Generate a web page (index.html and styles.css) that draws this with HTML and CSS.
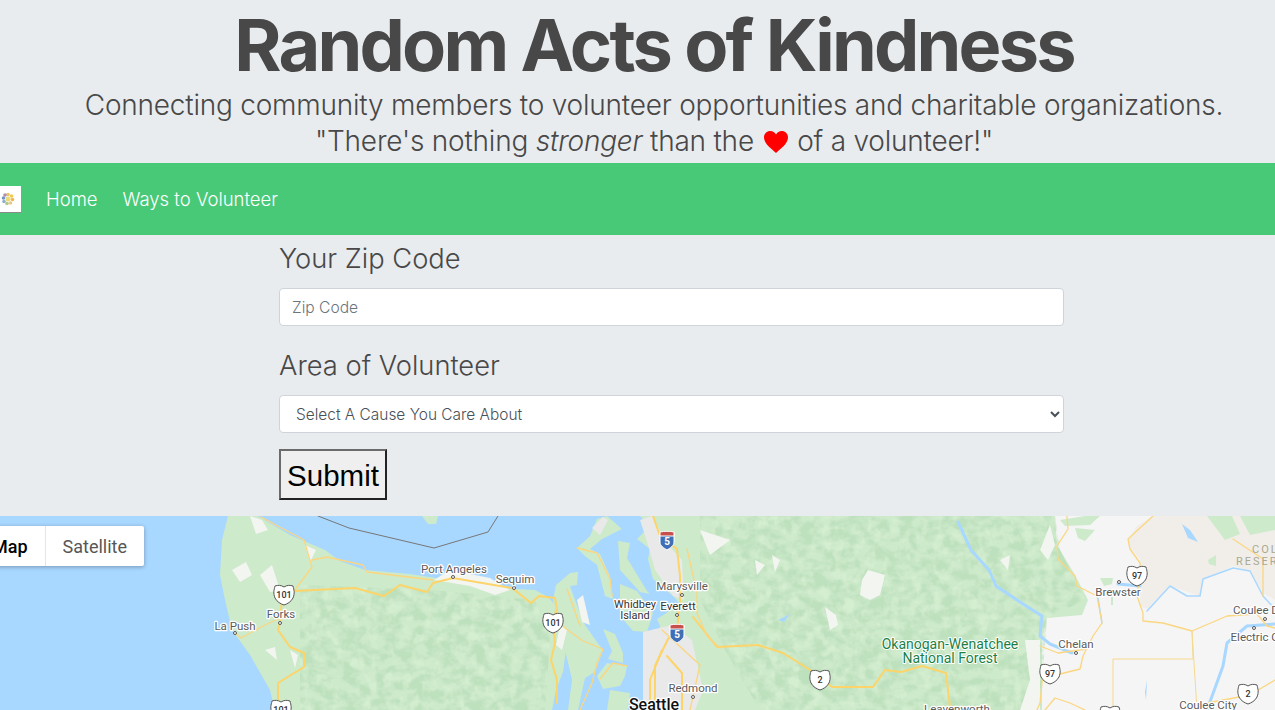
FILE: index.html
```html
<!DOCTYPE html>
<html lang="en">
<head>
<meta charset="utf-8">
<title>Random Acts of Kindness</title>
<link rel="stylesheet" href="styles.css">
</head>
<body>
<header class="hero">
  <h1 class="hero-title">Random Acts of Kindness</h1>
  <p class="hero-lead">Connecting community members to volunteer opportunities and charitable organizations.</p>
  <p class="hero-lead">"There's nothing <em>stronger</em> than the <svg class="heart" viewBox="0 0 24 22" aria-label="heart"><path d="M12 22C8 18 0 13 0 6.500C0 2.500 3 0 6.300 0C8.800 0 10.800 1.300 12 3.500C13.200 1.300 15.200 0 17.700 0C21 0 24 2.500 24 6.500C24 13 16 18 12 22Z"/></svg> of a volunteer!"</p>
</header>
<nav class="navbar">
  <a class="brand" href="#"><svg class="brand-logo" viewBox="0 0 16 16"><circle cx="8" cy="3.500" r="1.800" fill="#e9c65a"/><circle cx="11.500" cy="5" r="1.800" fill="#f0c94f"/><circle cx="12.500" cy="8.500" r="1.800" fill="#eeb84f"/><circle cx="10.500" cy="12" r="1.800" fill="#e9c98a"/><circle cx="7" cy="12.500" r="1.800" fill="#b7c88a"/><circle cx="4" cy="10.500" r="1.800" fill="#8fb0c9"/><circle cx="3.500" cy="7" r="1.800" fill="#6f94c9"/><circle cx="5" cy="4" r="1.800" fill="#b08fb0"/><circle cx="8" cy="8" r="2.500" fill="#eed97a"/></svg></a>
  <a class="nav-link" href="#">Home</a>
  <a class="nav-link" href="#">Ways to Volunteer</a>
</nav>
<form class="search-form">
  <label class="field-label" for="zip">Your Zip Code</label>
  <input class="field-control" id="zip" type="text" placeholder="Zip Code">
  <label class="field-label field-label-second" for="cause">Area of Volunteer</label>
  <select class="field-control field-select" id="cause"><option>Select A Cause You Care About</option></select>
  <button class="submit-button" type="button">Submit</button>
</form>
<section class="map">
  <svg class="map-canvas" viewBox="0 516 1275 194" width="1275" height="194">
    <defs>
      <filter id="relief-dark" x="0" y="0" width="100%" height="100%" color-interpolation-filters="sRGB">
        <feTurbulence type="fractalNoise" baseFrequency="0.07 0.1" numOctaves="3" seed="7"/>
        <feColorMatrix type="matrix" values="0 0 0 0 0.70  0 0 0 0 0.85  0 0 0 0 0.70  4 0 0 0 -1.500"/>
      </filter>
      <filter id="relief-light" x="0" y="0" width="100%" height="100%" color-interpolation-filters="sRGB">
        <feTurbulence type="fractalNoise" baseFrequency="0.09 0.07" numOctaves="3" seed="23"/>
        <feColorMatrix type="matrix" values="0 0 0 0 0.86  0 0 0 0 0.95  0 0 0 0 0.84  4 0 0 0 -1.900"/>
      </filter>
      <clipPath id="mountains-west"><path d="M300 585L430 590L535 600L550 640L545 710L300 710Z"/></clipPath>
      <clipPath id="mountains-east"><path d="M700 516L1055 516L1060 550L1085 600L1047 618L1040 710L760 710L725 650L700 600Z"/></clipPath>
      <path id="shield" d="M-9 -9C-6 -10 -3 -10 0 -8C3 -10 6 -10 9 -9C10 -5 11 -2 9 3C7 7 3 9 0 10C-3 9 -7 7 -9 3C-11 -2 -10 -5 -9 -9Z"/>
      <g id="interstate"><path class="i-blue" d="M-7 -7H7V2C7 6 3 8 0 10C-3 8 -7 6 -7 2Z"/><path class="i-red" d="M-7 -8C-3 -9 3 -9 7 -8V-4H-7Z"/><text class="i-text" y="5">5</text></g>
    </defs>

    <!-- land -->
    <path class="land" d="M228 516L258 516L290 535L325 550L340 561L365 570L410 574L455 581L500 588L535 590L548 597L556 606L557 622L566 650L563 672L556 690L552 710L275 710L270 690L250 655L232 630L225 600L220 575L222 540Z"/>
    <path class="land" d="M640 516L1275 516L1275 710L643 710L647 659L657 643L660 626L657 619L680 604L673 596L653 579L648 559L650 549L637 539L650 526Z"/>
    <path class="land" d="M422 516L438 516L436 524L428 524Z"/>
    <path class="land" d="M556 585L570 573L578 572L577 585L570 586L575 600L585 625L597 642L603 650L595 672L585 678L578 710L568 710L572 680L565 650L558 620L553 600Z"/>
    <path class="land" d="M577 548L590 536L597 519L607 516L622 529L602 539L590 549L600 554L610 576L613 599L605 596L597 565L585 556Z"/>
    <path class="land" d="M618 541L630 543L627 558L647 591L650 594L640 592L620 570Z"/>
    <path class="land" d="M620 584L637 591L653 613L647 632L633 631L620 616Z"/>
    <path class="land" d="M603 629L615 634L623 653L623 663L608 659L612 651Z"/>
    <path class="land" d="M597 676L607 663L627 666L625 676L620 686L603 689Z"/>
    <path class="land" d="M610 690L630 693L628 710L607 710Z"/>
    <path class="dry" d="M1055 516L1275 516L1275 710L1042 710L1042 640L1047 618L1082 615L1088 600L1075 575L1057 545Z"/>
    <path class="land" d="M1075 528L1095 530L1085 541L1078 538ZM1100 578L1113 578L1112 584L1104 586ZM1111 597H1113V605H1111ZM1060 520L1085 516L1100 516L1090 525L1065 526Z"/>
    <path class="tan" d="M1128 540L1137 526L1153 516L1275 516L1275 600L1263 593L1250 571L1233 566L1203 579L1200 596L1170 586L1147 609L1140 606L1140 559L1128 546Z"/>
    <path class="land" d="M1207 516H1232L1240 534L1225 540ZM1240 516H1275V530L1250 535ZM1208 560L1216 555L1216 566L1209 564Z"/>

    <!-- terrain -->
    <rect class="relief" x="300" y="580" width="250" height="130" clip-path="url(#mountains-west)" filter="url(#relief-dark)"/>
    <rect class="relief" x="300" y="580" width="250" height="130" clip-path="url(#mountains-west)" filter="url(#relief-light)"/>
    <rect class="relief" x="700" y="516" width="390" height="194" clip-path="url(#mountains-east)" filter="url(#relief-dark)"/>
    <rect class="relief" x="700" y="516" width="390" height="194" clip-path="url(#mountains-east)" filter="url(#relief-light)"/>

    <!-- clearings and towns -->
    <path class="pale" d="M250 516L262 520L268 530L256 534ZM232 570L246 562L252 575L240 582ZM260 575L272 565L280 590L270 592ZM305 545L316 550L310 562ZM265 650L275 647L277 660ZM290 650L298 655L295 668ZM434 580L450 570L490 578L510 590L495 595L470 586Z"/>
    <path class="pale" d="M868 570L885 575L880 595L870 600L860 595L862 580ZM825 607L836 615L838 625L830 630ZM772 555L780 560L775 572ZM1025 640L1040 640L1040 710L1020 710L1030 680ZM1000 560L1010 555L1008 570ZM1050 525L1055 545L1048 560L1040 550Z"/>
    <path class="pale" d="M700 530L730 540L710 555ZM755 560L765 565L757 575Z"/>
    <path class="urban" d="M643 632L672 625L692 640L703 690L695 710L643 710Z"/>
    <path class="urban" d="M640 520L652 516L668 545L682 560L684 600L673 596L655 570L648 545Z"/>
    <path class="urban" d="M592 528L603 517L608 520L600 535Z"/>
    <path class="pale" d="M577 600L583 595L590 625L582 622ZM560 625L567 630L562 650L556 645Z"/>

    <!-- water -->
    <path class="river-wide" d="M958 522L971 550L989 570L996 586L1023 604L1042 616L1040 636L1050 644L1072 653"/>
    <path class="river" d="M1098 598L1102 623M1147 611L1170 586L1187 596L1200 596L1203 579L1233 568L1250 571L1263 596L1275 609"/>
    <path class="river-wide" d="M1118 584L1140 586M1207 710L1223 666L1227 643L1247 626L1275 624"/>
    <path class="water-patch" d="M1182 524L1190 530L1198 542L1188 538ZM778 620L790 614L784 622ZM1145 692L1147 680L1146 700Z"/>

    <!-- border -->
    <path class="border" d="M318 516L349 528L434 548L488 532L498 516"/>
    <path class="county" d="M1113 710V659H1193L1192 631L1197 710"/>

    <!-- roads -->
    <path class="road" d="M294 591L355 588L384 596L400 585L427 592L433 583L453 578L512 588L531 603L539 596L555 598L557 610L553 620L555 643L551 660L557 680L557 703"/>
    <path class="road" d="M282 598L280 623L278 630L290 647L304 653L304 667L278 683L278 710"/>
    <path class="road-thin" d="M294 591L312 567L304 540L261 517M312 560L327 557L363 565L367 572L433 580M235 633L241 638L265 625L280 618"/>
    <path class="road" d="M653 516L660 536L677 549L680 576L680 603L677 629L668 639L655 666L655 710"/>
    <path class="road" d="M667 656L682 673L682 710M662 650L650 680L650 710M693 617L717 647L758 645L783 653L815 673L832 687L873 687L885 670L901 672L922 666L946 673L950 707"/>
    <path class="road-thin" d="M1153 516L1128 539L1130 549L1140 563L1140 573L1137 596L1143 613L1143 621L1163 623L1192 631L1227 616L1257 614L1267 626L1275 628"/>
    <path class="road-thin" d="M1067 516L1068 529L1057 546L1058 559L1075 576L1077 586L1097 596L1102 623L1093 636L1083 656L1080 669L1060 674L1043 673L1040 703L1037 710M1040 646L1058 653L1087 649"/>
    <path class="road-thin" d="M1233 539L1263 559L1263 596M1207 703L1250 695L1275 680M1045 710L1055 698L1070 703L1085 710"/>
    <path class="road-thin" d="M557 606L555 613L565 628L583 641L603 649L597 663L592 683L580 710M567 589L580 626M577 548L597 553L610 579L612 596M600 679L613 663L627 666M687 549L697 593L697 613L707 636L720 648M662 630L700 665L690 710"/>

    <!-- shields -->
    <g transform="translate(284 595)"><use href="#shield" class="shield"/><text class="shield-text" y="3">101</text></g>
    <g transform="translate(553 623)"><use href="#shield" class="shield"/><text class="shield-text" y="3">101</text></g>
    <g transform="translate(281 710)"><use href="#shield" class="shield"/><text class="shield-text" y="3">101</text></g>
    <g transform="translate(820 680)"><use href="#shield" class="shield"/><text class="shield-text" y="3">2</text></g>
    <g transform="translate(1137 576)"><use href="#shield" class="shield"/><text class="shield-text" y="3">97</text></g>
    <g transform="translate(1050 674)"><use href="#shield" class="shield"/><text class="shield-text" y="3">97</text></g>
    <g transform="translate(1248 694)"><use href="#shield" class="shield"/><text class="shield-text" y="3">2</text></g>
    <g transform="translate(1110 716)"><use href="#shield" class="shield"/></g>
    <use href="#interstate" x="667" y="540"/>
    <use href="#interstate" x="677" y="633"/>

    <!-- place labels -->
    <g class="dots">
      <circle cx="453" cy="577" r="1.500"/><circle cx="514" cy="588" r="1.500"/><circle cx="280" cy="623" r="1.500"/><circle cx="235" cy="633" r="1.500"/>
      <circle cx="682" cy="595" r="1.500"/><circle cx="677" cy="615" r="1.500"/><circle cx="693" cy="697" r="1.500"/><circle cx="1119" cy="582" r="1.500"/><circle cx="1076" cy="653" r="1.500"/><circle cx="1265" cy="619" r="1.500"/><circle cx="1254" cy="628" r="1.500"/>
    </g>
    <text class="place" x="454" y="573">Port Angeles</text>
    <text class="place" x="515" y="583">Sequim</text>
    <text class="place" x="281" y="618">Forks</text>
    <text class="place" x="235" y="630">La Push</text>
    <text class="place" x="682" y="590">Marysville</text>
    <text class="place dark" x="678" y="610">Everett</text>
    <text class="place-small" x="635" y="608">Whidbey</text>
    <text class="place-small" x="635" y="619">Island</text>
    <text class="place" x="693" y="692">Redmond</text>
    <text class="city" x="654" y="710">Seattle</text>
    <text class="forest" x="950" y="649">Okanogan-Wenatchee</text>
    <text class="forest" x="950" y="663">National Forest</text>
    <text class="place" x="1118" y="596">Brewster</text>
    <text class="place" x="1076" y="648">Chelan</text>
    <text class="place" x="1256" y="614">Coulee D</text>
    <text class="place" x="1258" y="641">Electric Cit</text>
    <text class="place" x="1208" y="709">Coulee City</text>
    <text class="place" x="957" y="713">Leavenworth</text>
    <text class="reserve" x="1252" y="553">COL</text>
    <text class="reserve" x="1236" y="565">RESER</text>
  </svg>
  <div class="map-type">
    <span class="map-tab map-tab-active">Map</span>
    <span class="map-tab">Satellite</span>
  </div>
</section>
</body>
</html>
```
FILE: styles.css
```css
* { box-sizing: border-box; }
html, body { margin: 0; height: 100%; overflow: hidden; }
body {
  background: #e9ecef;
  color: #484848;
  font-family: Inter, "Liberation Sans", sans-serif;
}
.hero {
  height: 163px;
  padding: 9px 0 0 33px;
  text-align: center;
}
.hero-title {
  margin: 0 0 6px;
  font-size: 72px;
  line-height: 72px;
  font-weight: 700;
  letter-spacing: -2.800px;
}
.hero-lead {
  margin: 0;
  font-size: 28px;
  line-height: 36px;
  font-weight: 300;
  letter-spacing: -0.22px;
  white-space: nowrap;
}
.heart {
  width: 24px;
  height: 22px;
  margin: 0 2px;
  vertical-align: -2px;
  fill: #ff0000;
}
.navbar {
  display: flex;
  align-items: center;
  gap: 25px;
  height: 72px;
  background: #48c977;
}
.brand {
  display: flex;
  align-items: center;
  width: 21px;
  height: 27px;
  background: #fff;
  border-bottom: 1px solid #8a8a8a;
}
.brand-logo { width: 16px; height: 16px; }
.nav-link {
  color: #fff;
  font-size: 18.500px;
  font-weight: 300;
  text-decoration: none;
}
.search-form {
  display: flex;
  flex-direction: column;
  align-items: flex-start;
  height: 281px;
  padding: 7px 0 0 279px;
}
.field-label {
  font-size: 27.300px;
  line-height: 34px;
  font-weight: 300;
  margin-bottom: 12px;
}
.field-label-second { margin-top: 23px; margin-bottom: 12px; }
.field-control {
  width: 785px;
  height: 38px;
  padding: 6px 12px;
  background: #fff;
  border: 1px solid #ced4da;
  border-radius: 4px;
  color: #495057;
  font-family: inherit;
  font-size: 15.600px;
  font-weight: 300;
}
.field-select { font-size: 15.450px; }
.field-control::placeholder { color: #6c757d; opacity: 1; }
.submit-button {
  width: 108px;
  height: 51px;
  margin-top: 16px;
  padding: 2px 0 0;
  background: #efefef;
  border: 2px solid;
  border-color: #6b6b6b #222 #222 #6b6b6b;
  color: #000;
  font-family: "Liberation Sans", Arial, sans-serif;
  font-size: 29.500px;
}
.map {
  position: relative;
  height: 194px;
  overflow: hidden;
  background: #a8d7ff;
}
.map-canvas { display: block; }
.map-type {
  position: absolute;
  left: -25px;
  top: 10px;
  display: flex;
  height: 40px;
  background: #fff;
  border-radius: 2px;
  box-shadow: 0 1px 4px rgba(0, 0, 0, .3);
  font-family: Roboto, sans-serif;
  font-size: 18px;
  line-height: 42px;
  color: #565656;
}
.map-tab { padding: 0 17px; }
.map-tab + .map-tab { border-left: 1px solid #e6e6e6; }
.map-tab-active { color: #000; font-weight: 500; }

.land { fill: #cdeacb; }
.dry { fill: #f5f5f5; }
.tan { fill: #f1eeea; }
.pale { fill: #f3f5f1; }
.urban { fill: #e9e9e9; }
.relief { fill: #000; opacity: .55; }
.river, .river-wide, .road, .road-thin, .border, .county { fill: none; stroke-linejoin: round; stroke-linecap: round; }
.river { stroke: #a8d7ff; stroke-width: 1.500; }
.river-wide { stroke: #a8d7ff; stroke-width: 3; }
.water-patch { fill: #a8d7ff; }
.border { stroke: #777; stroke-width: 1; }
.county { stroke: #f5d98f; stroke-width: 1; }
.road { stroke: #fdd469; stroke-width: 2; }
.road-thin { stroke: #fbd680; stroke-width: 1.300; }
.shield { fill: #fff; stroke: #555; stroke-width: 1; }
.shield-text {
  fill: #333;
  font: 500 9px Roboto, sans-serif;
  text-anchor: middle;
}
.i-blue { fill: #3f6fb5; stroke: #fff; stroke-width: 1; }
.i-red { fill: #c8504b; stroke: #fff; stroke-width: 1; }
.i-text {
  fill: #fff;
  font: 700 10px Roboto, sans-serif;
  text-anchor: middle;
}
.dots circle { fill: #fff; stroke: #555; stroke-width: 1; }
.place, .place-small, .city, .forest, .reserve {
  text-anchor: middle;
  paint-order: stroke;
  stroke: #fff;
  stroke-width: 2.500;
  stroke-linejoin: round;
  font-family: Roboto, sans-serif;
}
.place { fill: #5b5b5b; font-size: 11.500px; }
.place.dark { fill: #333; }
.place-small { fill: #333; font-size: 11px; }
.city { fill: #111; font-size: 16px; font-weight: 500; }
.forest { fill: #1d7f45; font-size: 14px; stroke-width: 2; }
.reserve { fill: #a9a990; font-size: 11px; letter-spacing: 2px; stroke-width: 0; text-anchor: start; }
```
